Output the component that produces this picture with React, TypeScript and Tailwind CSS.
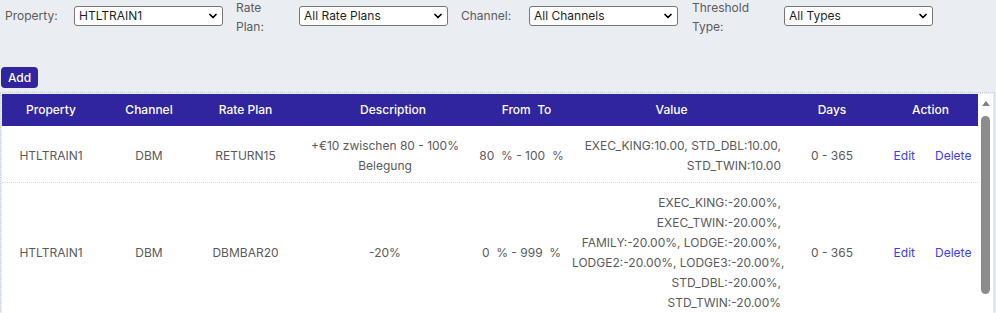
import { ChevronDown } from "lucide-react";

const cols =
  "grid grid-cols-[98px_98px_95px_184px_95px_217px_86px_103px] items-center";

function FilterSelect({ value }: { value: string }) {
  return (
    <div className="relative w-[149px] h-[20px] shrink-0">
      <select
        defaultValue={value}
        className="appearance-none w-full h-full border border-[#767676] rounded-[3px] bg-white pl-[4px] text-[12px] leading-[18px] text-[#1f1f1f] outline-none"
      >
        <option>{value}</option>
      </select>
      <ChevronDown
        size={12}
        strokeWidth={3.5}
        className="absolute right-[4px] top-[4px] text-black pointer-events-none"
      />
    </div>
  );
}

const rows = [
  {
    property: "HTLTRAIN1",
    channel: "DBM",
    ratePlan: "RETURN15",
    description: ["+€10 zwischen 80 - 100%", "Belegung"],
    range: "80\u00a0 % - 100\u00a0 %",
    value: ["EXEC_KING:10.00, STD_DBL:10.00,", "STD_TWIN:10.00"],
    days: "0 - 365",
  },
  {
    property: "HTLTRAIN1",
    channel: "DBM",
    ratePlan: "DBMBAR20",
    description: ["-20%"],
    range: "0\u00a0 % - 999\u00a0 %",
    value: [
      "EXEC_KING:-20.00%,",
      "EXEC_TWIN:-20.00%,",
      "FAMILY:-20.00%, LODGE:-20.00%,",
      "LODGE2:-20.00%, LODGE3:-20.00%,",
      "STD_DBL:-20.00%,",
      "STD_TWIN:-20.00%",
    ],
    days: "0 - 365",
  },
];

export default function App() {
  return (
    <main className="h-[313px] overflow-hidden bg-[#eaedf2] font-['Inter',sans-serif]">
      {/* Filters */}
      <div className="flex items-center pl-[5px] h-[32px] text-[12px] text-[#5c5c5c]">
        <span className="w-[69px] shrink-0">Property:</span>
        <FilterSelect value="HTLTRAIN1" />
        <span className="self-start ml-[13px] w-[63px] shrink-0 flex flex-col gap-[4px] leading-[15px]">
          <span>Rate</span>
          <span>Plan:</span>
        </span>
        <FilterSelect value="All Rate Plans" />
        <span className="ml-[13px] w-[68px] shrink-0">Channel:</span>
        <FilterSelect value="All Channels" />
        <span className="self-start ml-[14px] w-[92px] shrink-0 flex flex-col gap-[4px] leading-[15px]">
          <span>Threshold</span>
          <span>Type:</span>
        </span>
        <FilterSelect value="All Types" />
      </div>

      <button className="mt-[35px] ml-px h-[21px] w-[37px] rounded-[4px] bg-[#30249f] text-[12px] font-medium text-white">
        Add
      </button>

      {/* Table */}
      <div className="mt-[4px] w-[995px] border border-dotted border-[#c6d0dc] p-px">
        <div className="flex h-[230px] overflow-hidden bg-white">
          <div className="w-[976px] shrink-0">
            <div
              className={`${cols} h-[32px] bg-[#30249f] text-[12px] font-medium text-white text-center`}
            >
              <div>Property</div>
              <div>Channel</div>
              <div>Rate Plan</div>
              <div className="pl-[16px]">Description</div>
              <div className="pl-[4px]">From&nbsp; To</div>
              <div className="pr-[18px]">Value</div>
              <div>Days</div>
              <div className="pl-[8px]">Action</div>
            </div>
            {rows.map((r, i) => (
              <div
                key={i}
                className={`${cols} pt-[10px] pb-[6px] text-[12px] leading-[20px] text-[#5a5a5a] text-center border-b border-dotted border-[#cfd9e4]`}
              >
                <div>{r.property}</div>
                <div>{r.channel}</div>
                <div>{r.ratePlan}</div>
                <div>
                  {r.description.map((d) => (
                    <div key={d} className="whitespace-nowrap">
                      {d}
                    </div>
                  ))}
                </div>
                <div className="whitespace-nowrap pr-[6px]">{r.range}</div>
                <div className="text-right pr-[8px]">
                  {r.value.map((v) => (
                    <div key={v} className="whitespace-nowrap">
                      {v}
                    </div>
                  ))}
                </div>
                <div>{r.days}</div>
                <div className="flex justify-center gap-[20px] pl-[12px] text-[#3c3cf0]">
                  <a href="#">Edit</a>
                  <a href="#">Delete</a>
                </div>
              </div>
            ))}
          </div>

          {/* scrollbar */}
          <div className="w-[15px] shrink-0 flex flex-col items-center bg-white">
            <svg width="8" height="5" viewBox="0 0 8 5" className="mt-[7px]">
              <polygon points="4,0 8,5 0,5" fill="#808080" />
            </svg>
            <div className="mt-[10px] h-[178px] w-[9px] rounded-full bg-[#8c8c8c]" />
          </div>
        </div>
      </div>
    </main>
  );
}
